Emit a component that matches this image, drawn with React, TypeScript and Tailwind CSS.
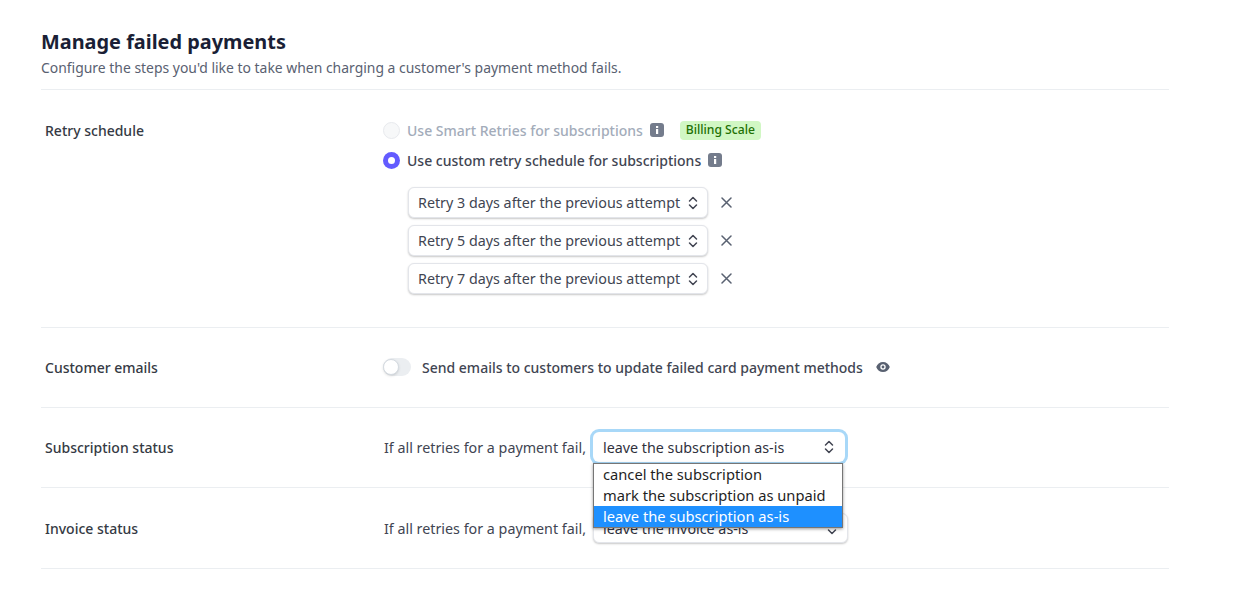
const font = "font-['Noto_Sans','Open_Sans',sans-serif]";

function Info() {
  return (
    <svg width="14" height="14" viewBox="0 0 14 14" className="shrink-0">
      <rect x="0" y="0" width="14" height="14" rx="3" fill="#747c8c" />
      <rect x="6" y="6" width="2.200" height="5" fill="#fff" />
      <rect x="6" y="3" width="2.200" height="2" fill="#fff" />
    </svg>
  );
}

function Chevrons({ color = "#414552" }: { color?: string }) {
  return (
    <svg width="10" height="14" viewBox="0 0 10 14" fill="none" stroke={color} strokeWidth="1.5" strokeLinecap="round" strokeLinejoin="round" className="shrink-0">
      <path d="M1.500 5 L5 1.500 L8.500 5" />
      <path d="M1.500 9 L5 12.500 L8.500 9" />
    </svg>
  );
}

function X() {
  return (
    <svg width="11" height="11" viewBox="0 0 11 11" fill="none" stroke="#596171" strokeWidth="1.5" strokeLinecap="round" className="shrink-0">
      <path d="M1 1 L10 10 M10 1 L1 10" />
    </svg>
  );
}

function Eye() {
  return (
    <svg width="14" height="10" viewBox="0 0 14 10" className="shrink-0">
      <path d="M7 0C3.800 0 1.300 2 0.200 5 1.300 8 3.800 10 7 10s5.700-2 6.800-5C12.700 2 10.200 0 7 0z" fill="#596171" />
      <circle cx="7" cy="5" r="2.700" fill="#fff" />
      <circle cx="7" cy="5" r="1.400" fill="#596171" />
    </svg>
  );
}

function Retry({ days }: { days: number }) {
  return (
    <div className="flex items-center gap-[13px]">
      <div className="flex h-[31px] w-[300px] items-center justify-between rounded-md border border-[#e3e5ea] bg-white pl-[9px] pr-[9px] text-[14.3px] text-[#414552] shadow-[0_1px_2px_rgba(0,0,0,0.22)]">
        <span className="whitespace-nowrap">Retry {days} days after the previous attempt</span>
        <Chevrons />
      </div>
      <X />
    </div>
  );
}

function Row({ label, className, children }: { label: string; className: string; children: React.ReactNode }) {
  return (
    <div className={`flex border-b border-[#ebeef1] ${className}`}>
      <div className="w-[342px] pl-[4px] text-[14px] font-medium leading-[20px] text-[#353a44]">{label}</div>
      <div className="-mt-px flex-1">{children}</div>
    </div>
  );
}

export default function App() {
  return (
    <div className={`${font} h-[608px] w-[1240px] overflow-hidden bg-white pl-[41px] pt-[28px]`}>
      <div className="w-[1128px]">
        <div className="h-[62px] border-b border-[#ebeef1]">
          <h1 className="text-[19.900px] font-bold leading-[28px] text-[#1a1f36]">Manage failed payments</h1>
          <p className="text-[13.930px] leading-[23px] text-[#596171]">Configure the steps you'd like to take when charging a customer's payment method fails.</p>
        </div>

        <Row label="Retry schedule" className="h-[238px] pt-[31px]">
          <div className="flex h-[20px] items-center">
            <span className="h-[17px] w-[17px] rounded-full border border-[#e8eaee] bg-[#f7f8f9]" />
            <span className="ml-[7px] text-[14px] font-medium text-[#a3acba]">Use Smart Retries for subscriptions</span>
            <span className="ml-[7px]"><Info /></span>
            <span className="ml-[16px] flex h-[19px] w-[81px] items-center justify-center rounded bg-[#d1f7c4] pt-px text-[12.150px] font-medium text-[#217005]">Billing Scale</span>
          </div>
          <div className="mt-[10px] flex h-[20px] items-center">
            <span className="flex h-[17px] w-[17px] items-center justify-center rounded-full bg-[#635bff]">
              <span className="h-[7px] w-[7px] rounded-full bg-white" />
            </span>
            <span className="ml-[7px] text-[14px] font-medium text-[#414552]">Use custom retry schedule for subscriptions</span>
            <span className="ml-[7px]"><Info /></span>
          </div>
          <div className="ml-[25px] mt-[17px] flex flex-col gap-[7px]">
            <Retry days={3} />
            <Retry days={5} />
            <Retry days={7} />
          </div>
        </Row>

        <Row label="Customer emails" className="h-[80px] pt-[30px]">
          <div className="flex h-[20px] items-center">
            <span className="flex h-[18px] w-[28px] items-center rounded-full bg-[#ebeef1]">
              <span className="h-[16px] w-[16px] rounded-full border border-[#d5dbe1] bg-white shadow-sm" />
            </span>
            <span className="ml-[11px] text-[14px] font-medium text-[#414552]">Send emails to customers to update failed card payment methods</span>
            <span className="ml-[13px]"><Eye /></span>
          </div>
        </Row>

        <Row label="Subscription status" className="h-[80px] pt-[30px]">
          <div className="flex h-[20px] items-center pl-px">
            <span className="pt-[2px] text-[14.300px] text-[#414552]">If all retries for a payment fail,</span>
            <div className="relative z-10 ml-[7px] flex h-[30px] w-[252px] items-center justify-between rounded-md bg-white pl-[10px] pr-[11px] text-[14.300px] text-[#30313d] shadow-[0_0_0_3px_#a8d8f8,0_1px_2px_rgba(0,0,0,0.2)]">
              <span className="pt-[2px]">leave the subscription as-is</span>
              <Chevrons />
              <div className="absolute left-0 top-[31px] w-[250px] border border-[#767676] bg-white text-[14.700px] leading-[21px] text-[#1f1f1f] shadow-[0_1px_3px_rgba(0,0,0,0.4)]">
                <div className="pl-[9px]">cancel the subscription</div>
                <div className="pl-[9px]">mark the subscription as unpaid</div>
                <div className="bg-[#1e90ff] pl-[9px] text-white">leave the subscription as-is</div>
              </div>
            </div>
          </div>
        </Row>

        <Row label="Invoice status" className="h-[81px] pt-[31px]">
          <div className="flex h-[20px] items-center pl-px">
            <span className="pt-[2px] text-[14.300px] text-[#414552]">If all retries for a payment fail,</span>
            <div className="ml-[7px] flex h-[30px] w-[255px] items-center justify-between rounded-md border border-[#e3e5ea] bg-white pl-[9px] pr-[10px] text-[14.300px] text-[#30313d] shadow-[0_1px_2px_rgba(0,0,0,0.22)]">
              <span className="pt-[2px]">leave the invoice as-is</span>
              <Chevrons />
            </div>
          </div>
        </Row>
      </div>
    </div>
  );
}
